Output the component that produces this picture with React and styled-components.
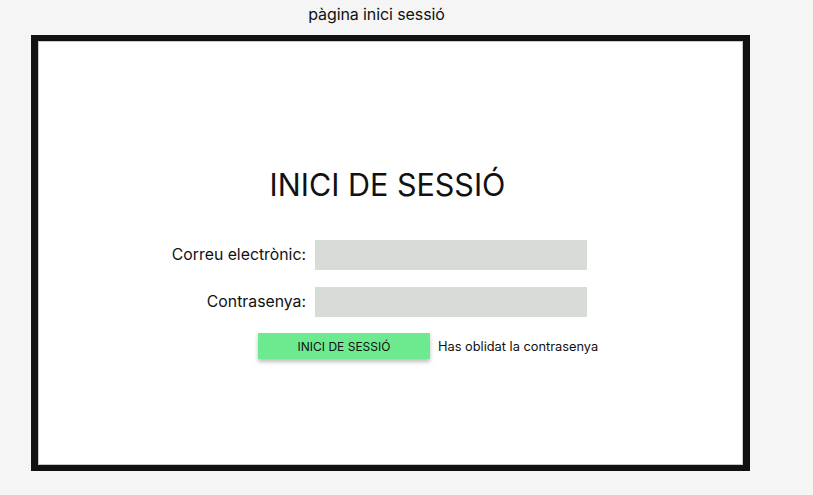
import styled, { createGlobalStyle } from 'styled-components';

const GlobalStyle = createGlobalStyle`
  html, body {
    margin: 0;
    padding: 0;
    background: #f5f5f5;
    font-family: Inter, "Noto Sans", sans-serif;
    color: #111;
  }
`;

const Page = styled.div`
  width: 719px;
  margin-left: 31px;
  padding-top: 4px;
`;

const PageTitle = styled.div`
  text-align: center;
  font-size: 16px;
  line-height: 20px;
  height: 31px;
  padding-right: 28px;
  letter-spacing: -0.1px;
`;

const Frame = styled.div`
  box-sizing: border-box;
  height: 436px;
  background: #fff;
  border: 6px solid #111;
  border-left-width: 7px;
  border-right-width: 7px;
  box-shadow: inset 0 0 0 1px #c8c8c8;
  padding-top: 124px;
`;

const Heading = styled.h1`
  margin: 0 0 35px 0;
  text-align: center;
  font-size: 30.5px;
  font-weight: 400;
  line-height: 40px;
  padding-right: 6px;
`;

const Form = styled.form`
  display: grid;
  grid-template-columns: 135px 272px;
  column-gap: 9px;
  row-gap: 17px;
  margin-left: 133px;
`;

const Label = styled.label`
  text-align: right;
  font-size: 15.8px;
  line-height: 30px;
`;

const Field = styled.input`
  box-sizing: border-box;
  height: 30px;
  border: none;
  background: #d8dbd8;
  outline: none;
`;

const Actions = styled.div`
  display: flex;
  align-items: center;
  gap: 8px;
  margin: 16px 0 0 220px;
`;

const Button = styled.button`
  width: 172px;
  height: 26px;
  border: none;
  background: #6de990;
  box-shadow: 0 3px 4px rgba(0, 0, 0, 0.25);
  font-family: inherit;
  font-size: 12px;
  color: #111;
  cursor: pointer;
`;

const Forgot = styled.span`
  font-size: 12.8px;
`;

export default function App() {
  return (
    <>
      <GlobalStyle />
      <Page>
        <PageTitle>pàgina inici sessió</PageTitle>
        <Frame>
          <Heading>INICI DE SESSIÓ</Heading>
          <Form onSubmit={e => e.preventDefault()}>
            <Label htmlFor="email">Correu electrònic:</Label>
            <Field id="email" type="email" />
            <Label htmlFor="pass">Contrasenya:</Label>
            <Field id="pass" type="password" />
          </Form>
          <Actions>
            <Button type="button">INICI DE SESSIÓ</Button>
            <Forgot>Has oblidat la contrasenya</Forgot>
          </Actions>
        </Frame>
      </Page>
    </>
  );
}
